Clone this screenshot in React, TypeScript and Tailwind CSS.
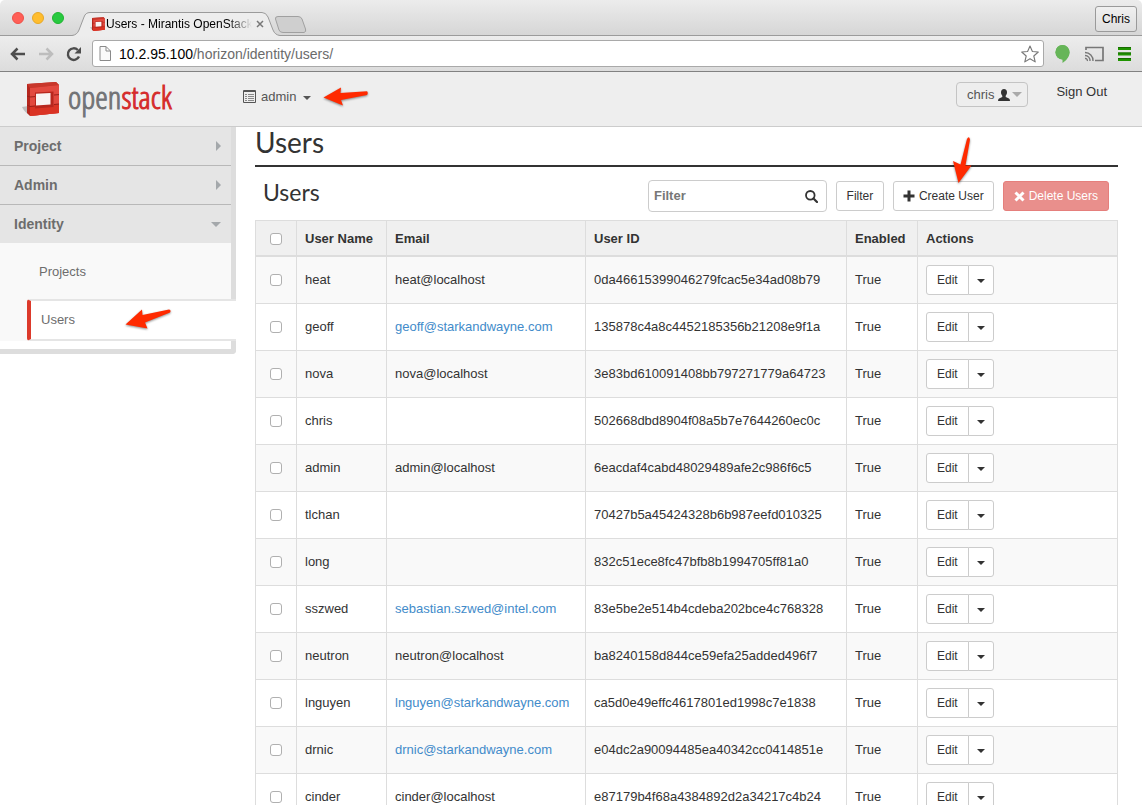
import React from 'react';

type User = { name: string; email: string; id: string; link?: boolean };

const users: User[] = [
  { name: 'heat', email: 'heat@localhost', id: '0da46615399046279fcac5e34ad08b79' },
  { name: 'geoff', email: 'geoff@starkandwayne.com', id: '135878c4a8c4452185356b21208e9f1a', link: true },
  { name: 'nova', email: 'nova@localhost', id: '3e83bd610091408bb797271779a64723' },
  { name: 'chris', email: '', id: '502668dbd8904f08a5b7e7644260ec0c' },
  { name: 'admin', email: 'admin@localhost', id: '6eacdaf4cabd48029489afe2c986f6c5' },
  { name: 'tlchan', email: '', id: '70427b5a45424328b6b987eefd010325' },
  { name: 'long', email: '', id: '832c51ece8fc47bfb8b1994705ff81a0' },
  { name: 'sszwed', email: 'sebastian.szwed@intel.com', id: '83e5be2e514b4cdeba202bce4c768328', link: true },
  { name: 'neutron', email: 'neutron@localhost', id: 'ba8240158d844ce59efa25added496f7' },
  { name: 'lnguyen', email: 'lnguyen@starkandwayne.com', id: 'ca5d0e49effc4617801ed1998c7e1838', link: true },
  { name: 'drnic', email: 'drnic@starkandwayne.com', id: 'e04dc2a90094485ea40342cc0414851e', link: true },
  { name: 'cinder', email: 'cinder@localhost', id: 'e87179b4f68a4384892d2a34217c4b24' },
];

function OpenStackMark({ className }: { className: string }) {
  return (
    <svg className={className} viewBox="0 0 40 36" aria-hidden="true">
      <path d="M0 25 L6 24 L8 33 Q3 31 0 25 Z" fill="#aaa" opacity=".7" />
      <path d="M5 2 L34 0 L37 3 V31 L8 34 L5 31 Z" fill="#b5261d" />
      <path d="M5 2 L34 0 L37 3 L8 6 Z" fill="#c8372b" />
      <path d="M8 6 L37 3 V31 L8 34 Z" fill="#e2493f" />
      <path d="M8 24 L37 22 V31 L8 34 Z" fill="#da3324" />
      <path d="M5 14 L8 15 L13 14.600 M5 23 L8 24.500 L13 24 M32 13 L37 12.600 M32 22.500 L37 22" stroke="#99201a" strokeWidth="1" fill="none" />
      <path d="M13 10.500 L31.500 9.500 V25 L13 26.500 Z" fill="#b8271e" />
      <path d="M14 11.800 L28.500 11 V22.500 L14 23.500 Z" fill="#f8f3f3" />
    </svg>
  );
}

function Caret({ className }: { className: string }) {
  return (
    <svg className={className} viewBox="0 0 8 4" aria-hidden="true">
      <path d="M0 0 H8 L4 4 Z" fill="currentColor" />
    </svg>
  );
}

function Pointer({ d, viewBox, className }: { d: string; viewBox: string; className: string }) {
  return (
    <svg className={`pointer-events-none absolute drop-shadow-[0_1px_1px_rgba(0,0,0,0.45)] ${className}`} viewBox={viewBox} aria-hidden="true">
      <path d={d} fill="#ff2a00" />
    </svg>
  );
}

function BrowserChrome() {
  return (
    <div className="shrink-0">
      <div className="flex h-9 items-end rounded-t-[5px] border-b border-[#9b9b9b] bg-linear-to-b from-[#ececec] to-[#d6d6d6]">
        <div className="flex gap-2 self-center pt-px pl-3">
          <span className="size-3 rounded-full border border-[#ee5048] bg-[#ff5f57]" />
          <span className="size-3 rounded-full border border-[#e6a828] bg-[#ffbd2e]" />
          <span className="size-3 rounded-full border border-[#1fb530] bg-[#28c940]" />
        </div>
        <div className="relative ml-2 -mb-px flex h-6 w-52 items-center pl-[18px]">
          <svg className="absolute inset-0 h-6 w-52" viewBox="0 0 208 24" aria-hidden="true">
            <path d="M0 23.5 Q5 23 7 18 L12 5 Q13.5 .5 18 .5 H190 Q194 .5 196 5 L201 18 Q203 23 208 23.5 V24 H0 Z" fill="#ededed" />
            <path d="M0 23.5 Q5 23 7 18 L12 5 Q13.5 .5 18 .5 H190 Q194 .5 196 5 L201 18 Q203 23 208 23.5" fill="none" stroke="#9b9b9b" />
          </svg>
          <OpenStackMark className="relative h-[15px] w-4 shrink-0" />
          <span className="relative w-[148px] whitespace-nowrap text-xs text-black [mask-image:linear-gradient(to_right,black_122px,transparent_146px)]">
            Users - Mirantis OpenStack
          </span>
          <button aria-label="Close tab" className="relative ml-[2px] flex">
            <svg className="size-2" viewBox="0 0 8 8"><path d="M1 1 L7 7 M7 1 L1 7" stroke="#777" strokeWidth="1.5" /></svg>
          </button>
        </div>
        <button aria-label="New tab" className="-ml-[6px] mb-[2px]">
          <svg className="block h-[17px] w-[34px]" viewBox="0 0 34 17">
            <path d="M4 .5 H24 Q27 .5 28 3 L31.500 13 Q32.500 16 30 16.500 H9 Q6 16.500 5 14 L1.500 3 Q1 .5 4 .5 Z" fill="#cfcfcf" stroke="#a0a0a0" />
          </svg>
        </button>
        <button className="mr-[5px] ml-auto mb-[3px] h-[26px] rounded-[3px] border border-[#9a9a9a] bg-linear-to-b from-[#f0f0f0] to-[#dedede] px-[6px] text-xs text-black">
          Chris
        </button>
      </div>
      <div className="flex h-9 items-center border-b border-[#818181] bg-linear-to-b from-[#ededed] to-[#dcdcdc] pr-[11px] pl-[10px]">
        <button aria-label="Back">
          <svg className="block h-[14px] w-4" viewBox="0 0 16 14"><path d="M15 7 H2 M7.500 1.500 L2 7 L7.500 12.500" fill="none" stroke="#4d4d4d" strokeWidth="2.500" /></svg>
        </button>
        <button aria-label="Forward" className="ml-3">
          <svg className="block h-[14px] w-4" viewBox="0 0 16 14"><path d="M1 7 H14 M8.500 1.500 L14 7 L8.500 12.500" fill="none" stroke="#bdbdbd" strokeWidth="2.500" /></svg>
        </button>
        <button aria-label="Reload" className="ml-3">
          <svg className="block size-4" viewBox="0 0 16 16"><path d="M13 10.500 A5.800 5.800 0 1 1 11.800 4" fill="none" stroke="#4d4d4d" strokeWidth="2.400" /><path d="M15 1 V7.500 H8.500 Z" fill="#4d4d4d" /></svg>
        </button>
        <div className="ml-[10px] flex h-[27px] flex-1 items-center rounded-[3px] border border-[#a9a9a9] bg-white pr-1 pl-[6px]">
          <svg className="h-[15px] w-3 shrink-0" viewBox="0 0 12 15" aria-hidden="true"><path d="M1 .5 H7 L11.500 5 V14.500 H1 Z M7 .5 V5 H11.500" fill="#fafafa" stroke="#8a8a8a" /></svg>
          <a href="#" className="ml-2 text-sm leading-5 text-[#6b6b6b]"><span className="text-black">10.2.95.100</span>/horizon/identity/users/</a>
          <button aria-label="Bookmark" className="ml-auto">
            <svg className="block size-[18px]" viewBox="0 0 18 18"><path d="M9 1 L11.400 6.500 L17.300 7 L12.800 11 L14.200 16.900 L9 13.700 L3.800 16.900 L5.200 11 L.7 7 L6.600 6.500 Z" fill="#fff" stroke="#777" strokeWidth="1.100" strokeLinejoin="round" /></svg>
          </button>
        </div>
        <button aria-label="Hangouts" className="ml-[11px]">
          <svg className="block h-[18px] w-[15px]" viewBox="0 0 15 18"><path d="M7.500 0 A7 7.200 0 0 1 14.500 7.300 C14.500 12 11 16 7.500 18 V14.500 A7 7.200 0 0 1 7.500 0 Z" fill="#66b558" /><ellipse cx="7.500" cy="7.200" rx="7" ry="7.200" fill="#66b558" /></svg>
        </button>
        <button aria-label="Cast" className="ml-[14px]">
          <svg className="block h-4 w-5" viewBox="0 0 20 16"><path d="M2 4 V1.500 H19 V14.500 H11" fill="none" stroke="#777" strokeWidth="1.700" /><path d="M1 6.500 A8 8 0 0 1 9 15 M1 9.500 A5 5 0 0 1 6 15 M1 12.500 A2 2 0 0 1 3.300 15" fill="none" stroke="#777" strokeWidth="1.400" /></svg>
        </button>
        <button aria-label="Menu" className="ml-[14px]">
          <svg className="block h-[14px] w-[13px]" viewBox="0 0 13 14"><path d="M0 1.500 H13 M0 7 H13 M0 12.500 H13" stroke="#1f9400" strokeWidth="3" /><path d="M0 .5 H13 M0 6 H13 M0 11.500 H13" stroke="#176b00" strokeWidth="1" /></svg>
        </button>
      </div>
    </div>
  );
}

function SiteHeader() {
  return (
    <header className="flex h-[55px] shrink-0 items-start border-b border-[#ccc] bg-[#eee] pr-[35px] pl-[22px] text-[13px] text-[#333]">
      <a href="#" aria-label="openstack" className="flex w-[221px] items-start pt-[10px]">
        <OpenStackMark className="h-9 w-10" />
        <span className="ml-[6px] font-['Open_Sans_Condensed_Light','Lato',sans-serif] text-[32px] leading-[30px] text-[#727376] [-webkit-text-stroke:1px_#727376]">
          open<span className="text-[#d52b2b] [-webkit-text-stroke:1px_#d52b2b]">stack</span>
        </span>
      </a>
      <div className="relative">
        <button className="mt-[15px] flex h-5 items-center text-[#555]">
          <svg className="-mt-[2px] h-[13px] w-[13px]" viewBox="0 0 13 13" aria-hidden="true">
            <path d="M.5 .5 H12.500 V12.500 H.5 Z M.5 1.500 H12.500" fill="none" stroke="#555" />
            <path d="M2 4.500 H4 M5 4.500 H11 M2 6.500 H4 M5 6.500 H11 M2 8.500 H4 M5 8.500 H11 M2 10.500 H4 M5 10.500 H11" stroke="#888" />
          </svg>
          <span className="ml-[5px]">admin</span>
          <Caret className="mt-[2px] ml-[7px] h-1 w-2" />
        </button>
        <Pointer className="top-[13px] left-[80px] h-6 w-[46px]" viewBox="0 0 46 24" d="M.5 12.500 L18 2.500 L17.500 8 L44 6.300 Q45.500 8 44 10 L18 15 L20 20.500 Z" />
      </div>
      <button className="mt-[10px] ml-auto flex h-[25px] items-center rounded-[4px] border border-[#c4c4c4] pr-[5px] pl-[10px] text-[#555]">
        chris
        <svg className="ml-1 h-3 w-3" viewBox="0 0 12 12" aria-hidden="true"><path d="M6 0 C8 0 9 1.300 9 3.300 C9 5 8.400 6 7.700 6.800 V8 L11 9.600 Q12 10.200 12 12 H0 Q0 10.200 1 9.600 L4.300 8 V6.800 C3.600 6 3 5 3 3.300 C3 1.300 4 0 6 0 Z" fill="#333" /></svg>
        <Caret className="ml-[2px] h-[5px] w-[10px] text-[#aaa]" />
      </button>
      <a href="#" className="mt-[10px] ml-7 leading-5">Sign Out</a>
    </header>
  );
}

function NavGroup({ label, open, className = '' }: { label: string; open?: boolean; className?: string }) {
  return (
    <button aria-expanded={!!open} className={`flex w-full items-center justify-between bg-[#e5e5e5] pr-[10px] pl-[14px] text-sm font-bold text-[#6d6d6d] ${className}`}>
      {label}
      {open ? (
        <Caret className="h-[5px] w-[10px] text-[#a4a8ab]" />
      ) : (
        <svg className="h-[10px] w-[5px]" viewBox="0 0 5 10" aria-hidden="true"><path d="M0 0 L5 5 L0 10 Z" fill="#a4a8ab" /></svg>
      )}
    </button>
  );
}

function Sidebar() {
  return (
    <nav className="w-[236px] shrink-0 rounded-br-[4px] border-r-[5px] border-b-[5px] border-[#ddd] bg-white pb-2 text-[13px] text-[#6d6d6d]">
      <NavGroup label="Project" className="h-[39px] border-b border-[#b8b8b8]" />
      <NavGroup label="Admin" className="h-[39px] border-b border-[#b8b8b8]" />
      <NavGroup label="Identity" open className="h-[38px]" />
      <div className="bg-[#f9f9f9] pl-[27px]">
        <a href="#" className="flex h-14 items-center pt-[2px] pl-3">Projects</a>
        <a href="#" aria-current="page" className="relative -mr-[5px] flex h-[42px] items-center rounded-l-[3px] border-y-2 border-l-4 border-y-[#e5e5e5] border-l-[#dc3a2b] bg-white pl-[10px]">
          Users
          <Pointer className="top-[7px] left-[94px] h-6 w-[47px]" viewBox="0 0 47 24" d="M.5 16.500 L17 1.500 L17.500 7 L44 1.500 Q46.500 2 45 4.500 L20 14.500 L22.500 20.500 Z" />
        </a>
      </div>
    </nav>
  );
}

const smallButton = 'relative flex h-[30px] items-center rounded-[3px] border border-[#ccc] bg-white px-[9px] text-xs text-[#333]';
const checkbox = 'block mx-auto size-3 appearance-none rounded-[3px] border border-[#b0b0b0] bg-white';
const headCell = 'border-r border-b-2 border-[#ddd] pt-[2px] pb-0 font-bold';
const cell = 'border-r border-b border-[#ddd] px-2 py-0';

function UsersTable() {
  return (
    <table className="w-full table-fixed border-separate border-spacing-0 border-t border-l border-[#ddd] text-left text-[13px] text-[#333]">
      <colgroup>
        <col className="w-[41px]" />
        <col className="w-[90px]" />
        <col className="w-[199px]" />
        <col className="w-[261px]" />
        <col className="w-[71px]" />
        <col />
      </colgroup>
      <thead className="bg-[#f0f0f0]">
        <tr className="h-9">
          <th className={headCell}><input type="checkbox" aria-label="Select all users" className={checkbox} /></th>
          {['User Name', 'Email', 'User ID', 'Enabled', 'Actions'].map((h) => (
            <th key={h} className={`${headCell} px-2`}>{h}</th>
          ))}
        </tr>
      </thead>
      <tbody>
        {users.map((u) => (
          <tr key={u.id} className="h-[47px] odd:bg-[#f9f9f9]">
            <td className="border-r border-b border-[#ddd]"><input type="checkbox" aria-label={`Select ${u.name}`} className={checkbox} /></td>
            <td className={cell}>{u.name}</td>
            <td className={cell}>{u.link ? <a href={`mailto:${u.email}`} className="text-[#428bca]">{u.email}</a> : u.email}</td>
            <td className={cell}>{u.id}</td>
            <td className={cell}>True</td>
            <td className={cell}>
              <div className="flex">
                <button className="h-[30px] rounded-l-[3px] border border-[#ccc] bg-white px-[10px] text-xs">Edit</button>
                <button aria-label={`More actions for ${u.name}`} className="-ml-px flex h-[30px] w-[26px] items-center justify-center rounded-r-[3px] border border-[#ccc] bg-white">
                  <Caret className="mt-px h-1 w-2" />
                </button>
              </div>
            </td>
          </tr>
        ))}
      </tbody>
    </table>
  );
}

export default function App() {
  return (
    <div className="flex h-screen flex-col overflow-hidden bg-white font-['Liberation_Sans',Arial,sans-serif]">
      <BrowserChrome />
      <SiteHeader />
      <div className="flex min-h-0 flex-1 items-start">
        <Sidebar />
        <main className="min-w-0 flex-1 pr-6 pl-[19px]">
          <h1 className="border-b-2 border-[#333] pb-2 font-['Lato',sans-serif] text-[28px] leading-[30px] text-[#333]">Users</h1>
          <div className="flex items-start pt-[13px] pr-[9px] pb-2 pl-2">
            <h2 className="mr-auto font-['Lato',sans-serif] text-[23px] leading-6 text-[#333]">Users</h2>
            <div className="flex items-center gap-[9px]">
              <label className="flex h-8 w-[179px] items-center rounded-[4px] border border-[#ccc] bg-white px-[5px]">
                <input aria-label="Filter" placeholder="Filter" className="min-w-0 flex-1 text-[13px] font-bold text-[#333] outline-none placeholder:text-[#777]" />
                <svg className="mr-[3px] size-[13px]" viewBox="0 0 13 13" aria-hidden="true"><circle cx="5.300" cy="5.300" r="4.300" fill="none" stroke="#333" strokeWidth="1.800" /><path d="M8.500 8.500 L12 12" stroke="#333" strokeWidth="2.200" strokeLinecap="round" /></svg>
              </label>
              <button className={`${smallButton} min-w-12 justify-center`}>Filter</button>
              <button className={smallButton}>
                <svg className="mr-1 size-3" viewBox="0 0 12 12" aria-hidden="true"><path d="M6 .5 V11.500 M.5 6 H11.500" stroke="#333" strokeWidth="3" /></svg>
                Create User
                <Pointer className="-top-[46px] left-[58px] h-12 w-5" viewBox="0 0 20 48" d="M6.500 47 L1 25 L8.500 28.500 L15 3 Q17 -.5 18 3.500 L13.500 29.500 L19.500 29.500 Z" />
              </button>
              <button disabled className="flex h-[30px] items-center rounded-[3px] border border-[#e57f7c] bg-[#e98f8c] px-[10px] text-xs text-white">
                <svg className="mr-1 size-[11px]" viewBox="0 0 11 11" aria-hidden="true"><path d="M1.500 1.500 L9.500 9.500 M9.500 1.500 L1.500 9.500" stroke="#fff" strokeWidth="3" /></svg>
                Delete Users
              </button>
            </div>
          </div>
          <UsersTable />
        </main>
      </div>
    </div>
  );
}
